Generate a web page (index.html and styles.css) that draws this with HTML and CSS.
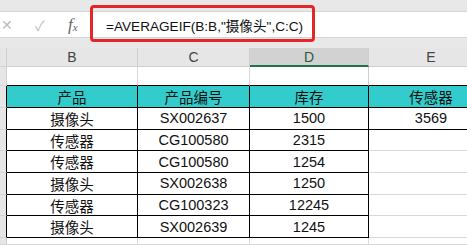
FILE: index.html
```html
<!DOCTYPE html>
<html lang="zh">
<head>
    <meta charset="UTF-8">
    <title>AVERAGEIF</title>
    <link rel="stylesheet" href="styles.css">
</head>
<body>

<!-- Barra de fórmulas -->
<div class="fbar">
    <div class="fbar-inner">
        <div class="icons">
            <span class="ico cancel">✕</span>
            <span class="ico ok">✓</span>
            <span class="ico fx">f<sub>x</sub></span>
        </div>
        <div class="formula">=AVERAGEIF(B:B,"摄像头",C:C)</div>
    </div>
</div>

<!-- Hoja -->
<div class="sheet">
    <div class="rh"></div>
    <div class="ch">B</div>
    <div class="ch">C</div>
    <div class="ch sel">D</div>
    <div class="ch e">E</div>

    <div class="rh"></div>
    <div class="c top"></div>
    <div class="c top"></div>
    <div class="c top colsel"></div>
    <div class="c top e"></div>

    <div class="rh edge"></div>
    <div class="c t head">产品</div>
    <div class="c t head">产品编号</div>
    <div class="c t head">库存</div>
    <div class="c t head e">传感器</div>

    <div class="rh edge"></div>
    <div class="c t">摄像头</div>
    <div class="c t">SX002637</div>
    <div class="c t">1500</div>
    <div class="c t e">3569</div>

    <div class="rh edge"></div>
    <div class="c t">传感器</div>
    <div class="c t">CG100580</div>
    <div class="c t">2315</div>
    <div class="c e"></div>

    <div class="rh edge"></div>
    <div class="c t">传感器</div>
    <div class="c t">CG100580</div>
    <div class="c t">1254</div>
    <div class="c e"></div>

    <div class="rh edge"></div>
    <div class="c t">摄像头</div>
    <div class="c t">SX002638</div>
    <div class="c t">1250</div>
    <div class="c e"></div>

    <div class="rh edge"></div>
    <div class="c t">传感器</div>
    <div class="c t">CG100323</div>
    <div class="c t">12245</div>
    <div class="c e"></div>

    <div class="rh edge"></div>
    <div class="c t">摄像头</div>
    <div class="c t">SX002639</div>
    <div class="c t">1245</div>
    <div class="c e"></div>

    <div class="rh"></div>
    <div class="c"></div>
    <div class="c"></div>
    <div class="c"></div>
    <div class="c e"></div>
</div>

</body>
</html>
```

FILE: styles.css
```css
* {
    box-sizing: border-box;
}

body {
    margin: 0;
    width: 467px;
    height: 245px;
    overflow: hidden;
    background: #e6e6e6;
    font-family: "Liberation Sans", "Noto Sans CJK SC", sans-serif;
    color: #111;
}

.fbar {
    padding: 11px 0 10px;
    background: #e8e8e8;
}

.fbar-inner {
    height: 27px;
    display: flex;
    align-items: center;
    background: #fff;
    border-top: 1px solid #d6d6d6;
    border-bottom: 1px solid #d6d6d6;
}

.icons {
    width: 88px;
    display: flex;
    align-items: center;
    height: 100%;
}

.ico {
    color: #bcbcbc;
    font-size: 14px;
}
.cancel {
    margin-left: 1px;
    width: 34px;
}
.ok {
    width: 33px;
}
.fx {
    color: #666;
    font-family: "Liberation Serif", serif;
    font-style: italic;
    font-size: 17px;
}
.fx sub {
    font-size: 11px;
    vertical-align: -1px;
}

.formula {
    position: relative;
    align-self: stretch;
    display: flex;
    align-items: center;
    margin-left: 18px;
    font-size: 13.6px;
    color: #111;
    white-space: nowrap;
}
/* recuadro rojo */
.formula::after {
    content: "";
    position: absolute;
    left: -16px;
    right: -12px;
    top: -7px;
    bottom: -5px;
    border: 3px solid #e3262a;
    border-radius: 4px;
}

.sheet {
    display: grid;
    grid-template-columns: 7px 131px 112px 119px 1fr;
    grid-template-rows: 19px 19px 22px repeat(6, 21.7px) 1fr;
    background: #fff;
    height: 197px;
}

.rh {
    background: #e6e6e6;
    border-right: 1px solid #cfcfcf;
    border-bottom: 1px solid #d6d6d6;
}
.rh.edge {
    border-right-color: #000;
}

.ch {
    background: #e6e6e6;
    border-right: 1px solid #cfcfcf;
    border-bottom: 1px solid #cfcfcf;
    text-align: center;
    font-size: 14px;
    line-height: 18px;
    color: #444;
}
.ch.sel {
    background: #d2d2d2;
    border-bottom: 2px solid #217346;
    color: #2a5a3a;
}

.c {
    border-right: 1px solid #d9d9d9;
    border-bottom: 1px solid #d9d9d9;
    display: flex;
    align-items: center;
    justify-content: center;
    font-size: 14.5px;
}
.c.top {
    border-bottom-color: #000;
}
.c.colsel {
    border-right-color: #cfcfcf;
}
.c.t {
    border-right-color: #000;
    border-bottom-color: #000;
}
.c.head {
    background: #33cccc;
}

/* columna E, cortada por el borde derecho */
.ch.e,
.c.e {
    padding-left: 26px;
    border-right: 0;
}
```
